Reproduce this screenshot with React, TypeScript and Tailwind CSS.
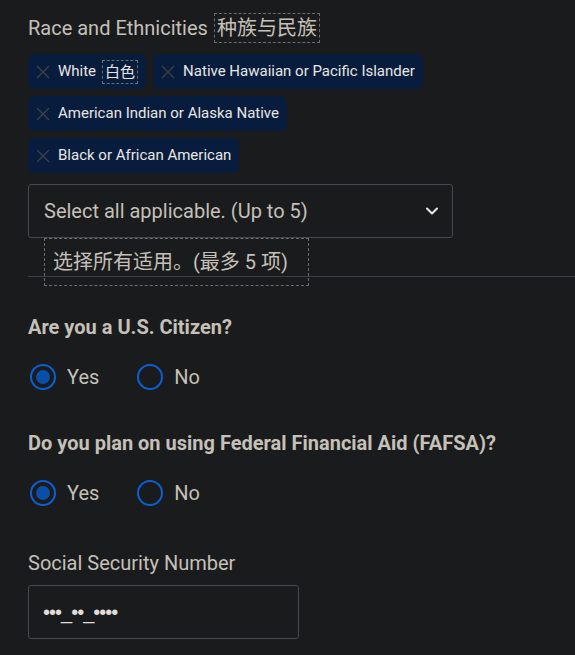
import { X, ChevronDown } from 'lucide-react'

const races = [
  { label: 'White', zh: '白色' },
  { label: 'Native Hawaiian or Pacific Islander' },
  { label: 'American Indian or Alaska Native' },
  { label: 'Black or African American' }
]

function Chip({ label, zh }: { label: string; zh?: string }): JSX.Element {
  return (
    <div className="flex h-[35px] items-center rounded-md bg-[#081d3d] pl-[4px] pr-2 text-[15px] text-[#e8e6e3]">
      <X size={22} strokeWidth={1.4} className="text-[#3f4246]" />
      <span className="ml-[4px]">{label}</span>
      {zh && (
        <span className="ml-[6px] border border-dashed border-[#6a6d70] px-[2px] leading-[22px]">
          {zh}
        </span>
      )}
    </div>
  )
}

function Radio({ checked, label }: { checked?: boolean; label: string }): JSX.Element {
  return (
    <label className="flex h-[26px] items-center gap-[11px]">
      <span className="flex h-[26px] w-[26px] items-center justify-center rounded-full border-2 border-[#0b5fd2]">
        {checked && <span className="h-[14px] w-[14px] rounded-full bg-[#0a4ea6]" />}
      </span>
      <span className="text-[20px] leading-[26px] text-[#c5c0b8]">{label}</span>
    </label>
  )
}

function App(): JSX.Element {
  return (
    <main
      className="min-h-screen w-full overflow-hidden bg-[#1a1b1d] pl-[28px] pt-[13px] text-[#c5c0b8]"
      style={{ fontFamily: 'Roboto, "Noto Sans CJK SC", sans-serif' }}
    >
      <div className="flex h-[30px] items-center text-[20px]">
        <span>Race and Ethnicities</span>
        <span className="ml-[6px] border border-dashed border-[#6a6d70] px-[2px] leading-[28px]">
          种族与民族
        </span>
      </div>

      <div className="mt-[11px] flex w-[424px] flex-wrap gap-[7px]">
        {races.map((r) => (
          <Chip key={r.label} label={r.label} zh={r.zh} />
        ))}
      </div>

      <div className="relative mt-[11px] w-[425px]">
        <div className="flex h-[54px] items-center justify-between rounded-[3px] border border-[#46494d] pl-[15px] pr-[10px] text-[20px]">
          <span>Select all applicable. (Up to 5)</span>
          <ChevronDown size={20} strokeWidth={2.5} className="text-[#e8e6e3]" />
        </div>
        <div className="absolute left-[16px] top-full z-10 flex h-[48px] w-[265px] items-center border border-dashed border-[#6a6d70] px-2 text-[20px]">
          选择所有适用。(最多 5 项)
        </div>
      </div>

      <div className="mt-[38px] h-px bg-[#3b3e42]" />

      <h3 className="mt-[38px] text-[20px] font-bold leading-[24px]">Are you a U.S. Citizen?</h3>
      <div className="mt-[25px] flex gap-[38px] pl-[2px]">
        <Radio checked label="Yes" />
        <Radio label="No" />
      </div>

      <h3 className="mt-[41px] text-[20px] font-bold leading-[24px]">
        Do you plan on using Federal Financial Aid (FAFSA)?
      </h3>
      <div className="mt-[25px] flex gap-[38px] pl-[2px]">
        <Radio checked label="Yes" />
        <Radio label="No" />
      </div>

      <p className="mt-[45px] text-[20px] leading-[24px]">Social Security Number</p>
      <div
        className="mt-[10px] flex h-[54px] w-[271px] items-center rounded-[3px] border border-[#46494d] pl-[14px] text-[20px] tracking-[-1px] text-[#e0ddd8]"
        style={{ fontFamily: '"Liberation Sans", sans-serif' }}
      >
        •••_••_••••
      </div>
    </main>
  )
}

export default App
